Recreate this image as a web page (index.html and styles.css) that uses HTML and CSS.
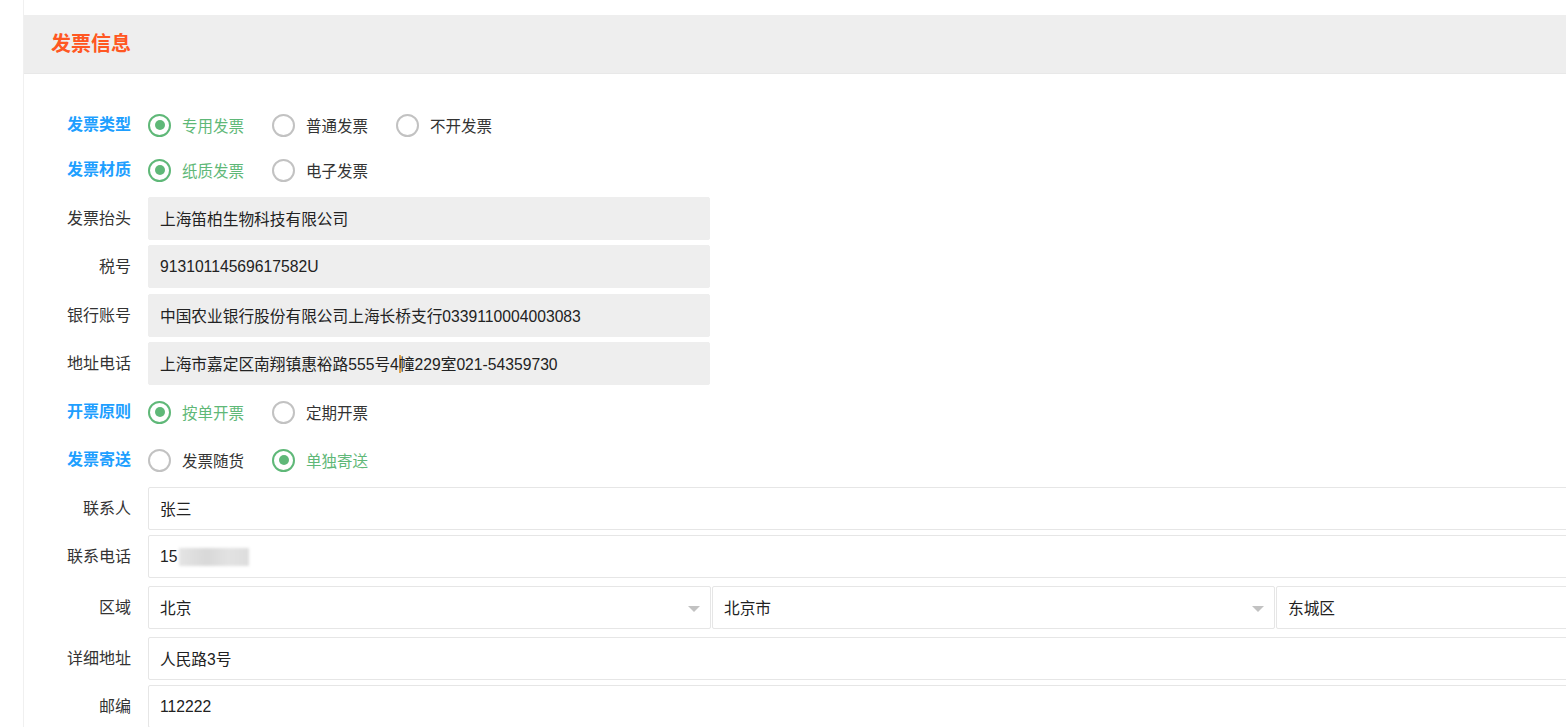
FILE: index.html
```html
<!DOCTYPE html>
<html lang="zh-CN">
<head>
<meta charset="utf-8">
<title>发票信息</title>
<link rel="stylesheet" href="styles.css">
</head>
<body>
<div class="page">
  <div class="card">
    <div class="card-header"><h2 class="title">发票信息</h2></div>
    <div class="form">
      <div class="row row-radio r1">
        <div class="label label-strong">发票类型</div>
        <div class="radios">
          <span class="radio checked"><i class="dot"></i><span>专用发票</span></span>
          <span class="radio"><i class="dot"></i><span>普通发票</span></span>
          <span class="radio"><i class="dot"></i><span>不开发票</span></span>
        </div>
      </div>
      <div class="row row-radio r2">
        <div class="label label-strong">发票材质</div>
        <div class="radios">
          <span class="radio checked"><i class="dot"></i><span>纸质发票</span></span>
          <span class="radio"><i class="dot"></i><span>电子发票</span></span>
        </div>
      </div>
      <div class="row row-input">
        <div class="label">发票抬头</div>
        <div class="field gray">上海笛柏生物科技有限公司</div>
      </div>
      <div class="row row-input g2">
        <div class="label">税号</div>
        <div class="field gray">91310114569617582U</div>
      </div>
      <div class="row row-input">
        <div class="label">银行账号</div>
        <div class="field gray">中国农业银行股份有限公司上海长桥支行0339110004003083</div>
      </div>
      <div class="row row-input r-last-gray">
        <div class="label">地址电话</div>
        <div class="field gray">上海市嘉定区南翔镇惠裕路555号4<span class="caret"></span>幢229室021-54359730</div>
      </div>
      <div class="row row-radio r3">
        <div class="label label-strong">开票原则</div>
        <div class="radios">
          <span class="radio checked"><i class="dot"></i><span>按单开票</span></span>
          <span class="radio"><i class="dot"></i><span>定期开票</span></span>
        </div>
      </div>
      <div class="row row-radio r4">
        <div class="label label-strong">发票寄送</div>
        <div class="radios">
          <span class="radio"><i class="dot"></i><span>发票随货</span></span>
          <span class="radio checked"><i class="dot"></i><span>单独寄送</span></span>
        </div>
      </div>
      <div class="row row-input">
        <div class="label">联系人</div>
        <div class="field white wide">张三</div>
      </div>
      <div class="row row-input r-wide-gap">
        <div class="label">联系电话</div>
        <div class="field white wide">15<span class="blur"></span></div>
      </div>
      <div class="row row-input r-wide-gap">
        <div class="label">区域</div>
        <div class="selects">
          <div class="field white select"><span>北京</span><i class="arrow"></i></div>
          <div class="field white select"><span>北京市</span><i class="arrow"></i></div>
          <div class="field white select"><span>东城区</span><i class="arrow"></i></div>
        </div>
      </div>
      <div class="row row-input">
        <div class="label">详细地址</div>
        <div class="field white wide">人民路3号</div>
      </div>
      <div class="row row-input">
        <div class="label">邮编</div>
        <div class="field white wide">112222</div>
      </div>
    </div>
  </div>
</div>
</body>
</html>
```

FILE: styles.css
```css
html, body {
  margin: 0;
  padding: 0;
  background: #ffffff;
  overflow: hidden;
}

body {
  font-family: "Liberation Sans", "Noto Sans CJK SC", sans-serif;
  font-size: 15.5px;
  color: #333333;
}

.page {
  margin-left: 23px;
  border-left: 1px solid #f0f0f0;
  padding-top: 15px;
  min-height: 727px;
  width: 1900px;
}

.card-header {
  height: 58px;
  background: #eeeeee;
  border-bottom: 1px solid #e8e8e8;
  display: flex;
  align-items: center;
  padding-left: 27px;
}

.title {
  margin: 0;
  font-size: 20px;
  font-weight: bold;
  color: #ff5722;
  font-family: "Noto Sans CJK SC", sans-serif;
  line-height: 1;
  position: relative;
  top: -1px;
}

.form {
  padding-top: 36px;
  width: 1813px;
}

.row {
  display: flex;
  align-items: center;
}

.label {
  width: 107px;
  margin-right: 17px;
  text-align: right;
  color: #333333;
  flex-shrink: 0;
  font-family: "Noto Sans CJK SC", sans-serif;
  font-size: 16px;
  line-height: 20px;
  position: relative;
  top: -2px;
}

.label-strong {
  color: #1e9fff;
  font-weight: bold;
}

.row-radio {
  height: 30px;
}

.r1 { margin-bottom: 15px; }
.r2 { margin-bottom: 12px; }
.r3 { margin-bottom: 18px; }
.r4 { margin-bottom: 12px; }

.row-input {
  margin-bottom: 5px;
}

.g2 { margin-bottom: 6px; }
.r-last-gray { margin-bottom: 12px; }
.r-wide-gap { margin-bottom: 8px; }

.radios {
  display: flex;
  align-items: center;
}

.radio {
  display: inline-flex;
  align-items: center;
  margin-right: 28px;
  font-family: "Noto Sans CJK SC", sans-serif;
  color: #333333;
  line-height: 20px;
}

.radio .dot {
  box-sizing: border-box;
  width: 23px;
  height: 23px;
  border: 2px solid #c2c2c2;
  border-radius: 50%;
  margin-right: 11px;
  display: inline-flex;
  align-items: center;
  justify-content: center;
}

.radio.checked {
  color: #5fb878;
}

.radio.checked .dot {
  border-color: #5fb878;
}

.radio.checked .dot::after {
  content: "";
  width: 10px;
  height: 10px;
  border-radius: 50%;
  background: #5fb878;
}

.field {
  box-sizing: border-box;
  height: 43px;
  padding-left: 11px;
  display: flex;
  align-items: center;
  border-radius: 2px;
  color: #222222;
  white-space: nowrap;
  font-size: 15.7px;
}

.gray {
  width: 562px;
  background: #eeeeee;
  border: 1px solid #eeeeee;
}

.white {
  background: #ffffff;
  border: 1px solid #e6e6e6;
}

.wide {
  flex: 1;
}

.selects {
  flex: 1;
  display: flex;
  gap: 1px;
}

.select {
  width: 563px;
  justify-content: space-between;
  padding-right: 10px;
}

.arrow {
  width: 0;
  height: 0;
  border-left: 6px solid transparent;
  border-right: 6px solid transparent;
  border-top: 6px solid #c2c2c2;
  margin-top: 2px;
}

.blur {
  display: inline-block;
  width: 70px;
  height: 18px;
  margin-left: 2px;
  background: linear-gradient(90deg, #e4e4e4, #d8d8d8 40%, #e2e2e2 70%, #dddddd);
  filter: blur(1.5px);
}

.caret {
  display: inline-block;
  width: 2px;
  height: 18px;
  background: #d9a04a;
  margin: 0 -2px 0 0;
}
```
